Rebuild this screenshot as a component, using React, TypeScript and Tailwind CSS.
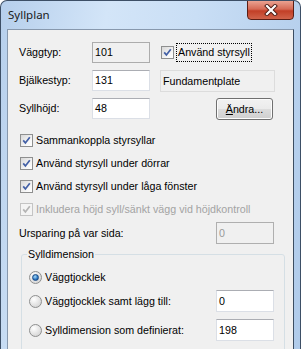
import * as React from "react";

const SANS = "font-['Liberation_Sans',Arial,sans-serif] text-[10.7px] leading-[13px] text-black";

function CheckBox({ disabled }: { disabled?: boolean }) {
  return (
    <span
      className={[
        "flex size-[13px] shrink-0 items-center justify-center border",
        disabled
          ? "border-[#c4c4c4] bg-[#f4f4f4]"
          : "border-[#8e8f8f] bg-[linear-gradient(135deg,#d8d8d8,#f8f8f8_70%,#ffffff)]",
      ].join(" ")}
    >
      <svg width="11" height="11" viewBox="0 0 11 11">
        <path
          d="M2.2 5.4 L4.4 7.9 L8.8 2.2"
          fill="none"
          stroke={disabled ? "#b4b4b4" : "#4360a6"}
          strokeWidth="1.7"
        />
      </svg>
    </span>
  );
}

function Radio({ checked }: { checked?: boolean }) {
  return (
    <span className="flex size-[13px] shrink-0 items-center justify-center rounded-full border border-[#8e8f8f] bg-[radial-gradient(circle_at_35%_30%,#ffffff,#d6d6d6_80%)]">
      {checked && (
        <span className="size-[7px] rounded-full border border-[#184a86] bg-[radial-gradient(circle_at_40%_35%,#a8dcfa,#2a74c0_60%,#14488a)]" />
      )}
    </span>
  );
}

function TextBox({
  value,
  variant = "normal",
  className = "",
}: {
  value: string;
  variant?: "normal" | "readonly" | "disabled" | "static";
  className?: string;
}) {
  const look = {
    normal: "border-[#dbdfe6] border-t-[#abadb3] bg-white text-black",
    readonly: "border-[#acacac] bg-[#f0f0f0] text-black",
    disabled: "border-[#afafaf] bg-[#f0f0f0] text-[#9a9a9a]",
    static: "border-[#dcdcdc] bg-[#f0f0f0] text-black",
  }[variant];
  return (
    <div className={`flex items-center border pl-[2px] ${look} ${className}`}>
      {value}
    </div>
  );
}

export default function App() {
  return (
    <div className="relative h-[349px] w-[301px] overflow-hidden rounded-t-[7px] border border-b-0 border-[#3d4f66] bg-[linear-gradient(100deg,#b6cfec_0%,#d3e5f8_30%,#c9def5_55%,#b9d2ee_80%,#b0cbea_100%)]">
      {/* title bar */}
      <div className="flex h-[28px] items-center pl-[7px] font-['Noto_Sans','Open_Sans',sans-serif] text-[11.5px] text-[#1a1a1a]">
        Syllplan
      </div>
      <div className="absolute right-[6px] top-[-1px] flex h-[20px] w-[47px] items-center justify-center rounded-b-[4px] border border-[#5b1e15] bg-[linear-gradient(#eba291,#d66a55_45%,#c23f27_55%,#d0634a)]">
        <svg width="14" height="12" viewBox="0 0 14 12">
          <path
            d="M3 2 L11 10 M11 2 L3 10"
            stroke="#4a1a12"
            strokeWidth="4"
            strokeLinecap="square"
          />
          <path
            d="M3 2 L11 10 M11 2 L3 10"
            stroke="#ffffff"
            strokeWidth="2.2"
            strokeLinecap="square"
          />
        </svg>
      </div>

      {/* client area */}
      <div className={`mx-[6px] h-[320px] border border-b-0 border-[#8798ad] border-r-[#3c4d61] bg-[#f0f0f0] pl-[11px] pt-[12px] ${SANS}`}>
        <div className="grid grid-cols-[73px_58px_10px_115px] grid-rows-[20px_20px_20px] gap-y-[8px]">
          <div className="flex items-center">Väggtyp:</div>
          <TextBox value="101" variant="readonly" className="h-[21px]" />
          <div />
          <div className="flex items-center pl-[1px]">
            <CheckBox />
            <span className="ml-[2px] border border-dotted border-black px-[1px] py-[2px]">
              Använd styrsyll
            </span>
          </div>

          <div className="flex items-center">Bjälkestyp:</div>
          <TextBox value="131" className="h-[21px]" />
          <div />
          <TextBox value="Fundamentplate" variant="static" className="h-[22px]" />

          <div className="flex items-center">Syllhöjd:</div>
          <TextBox value="48" className="h-[21px]" />
          <div />
          <div className="flex justify-end pr-[2px]">
            <button className="flex h-[22px] w-[57px] items-center justify-center rounded-[3px] border border-[#707070] bg-[linear-gradient(#f2f2f2,#ebebeb_50%,#dddddd_50%,#cfcfcf)] shadow-[inset_0_0_0_1px_#fcfcfc]">
              <span>
                <span className="underline">Ä</span>ndra...
              </span>
            </button>
          </div>
        </div>

        <div className="mt-[11px] flex flex-col pl-[1px]">
          <div className="flex h-[23px] items-center gap-[3px]">
            <CheckBox />
            <span>Sammankoppla styrsyllar</span>
          </div>
          <div className="flex h-[23px] items-center gap-[3px]">
            <CheckBox />
            <span>Använd styrsyll under dörrar</span>
          </div>
          <div className="flex h-[23px] items-center gap-[3px]">
            <CheckBox />
            <span>Använd styrsyll under låga fönster</span>
          </div>
          <div className="flex h-[23px] items-center gap-[3px]">
            <CheckBox disabled />
            <span className="text-[#a3a3a3]">
              Inkludera höjd syll/sänkt vägg vid höjdkontroll
            </span>
          </div>
        </div>

        <div className="mt-[1px] flex h-[22px] items-center">
          <span className="w-[197px]">Ursparing på var sida:</span>
          <TextBox value="0" variant="disabled" className="h-[22px] w-[58px]" />
        </div>

        <fieldset className="ml-[2px] mt-[4px] h-[120px] w-[264px] rounded-[3px] border border-[#d5dfe5] pl-[7px]">
          <legend className="ml-[-2px] px-[1px]">Sylldimension</legend>
          <div className="mt-[5px] flex h-[22px] items-center">
            <Radio checked />
            <span className="ml-[3px]">Väggtjocklek</span>
          </div>
          <div className="mt-[2px] flex h-[22px] items-center">
            <Radio />
            <span className="ml-[3px] w-[171px]">Väggtjocklek samt lägg till:</span>
            <TextBox value="0" className="h-[22px] w-[58px]" />
          </div>
          <div className="mt-[7px] flex h-[22px] items-center">
            <Radio />
            <span className="ml-[3px] w-[171px]">Sylldimension som definierat:</span>
            <TextBox value="198" className="h-[22px] w-[58px]" />
          </div>
        </fieldset>
      </div>
    </div>
  );
}
